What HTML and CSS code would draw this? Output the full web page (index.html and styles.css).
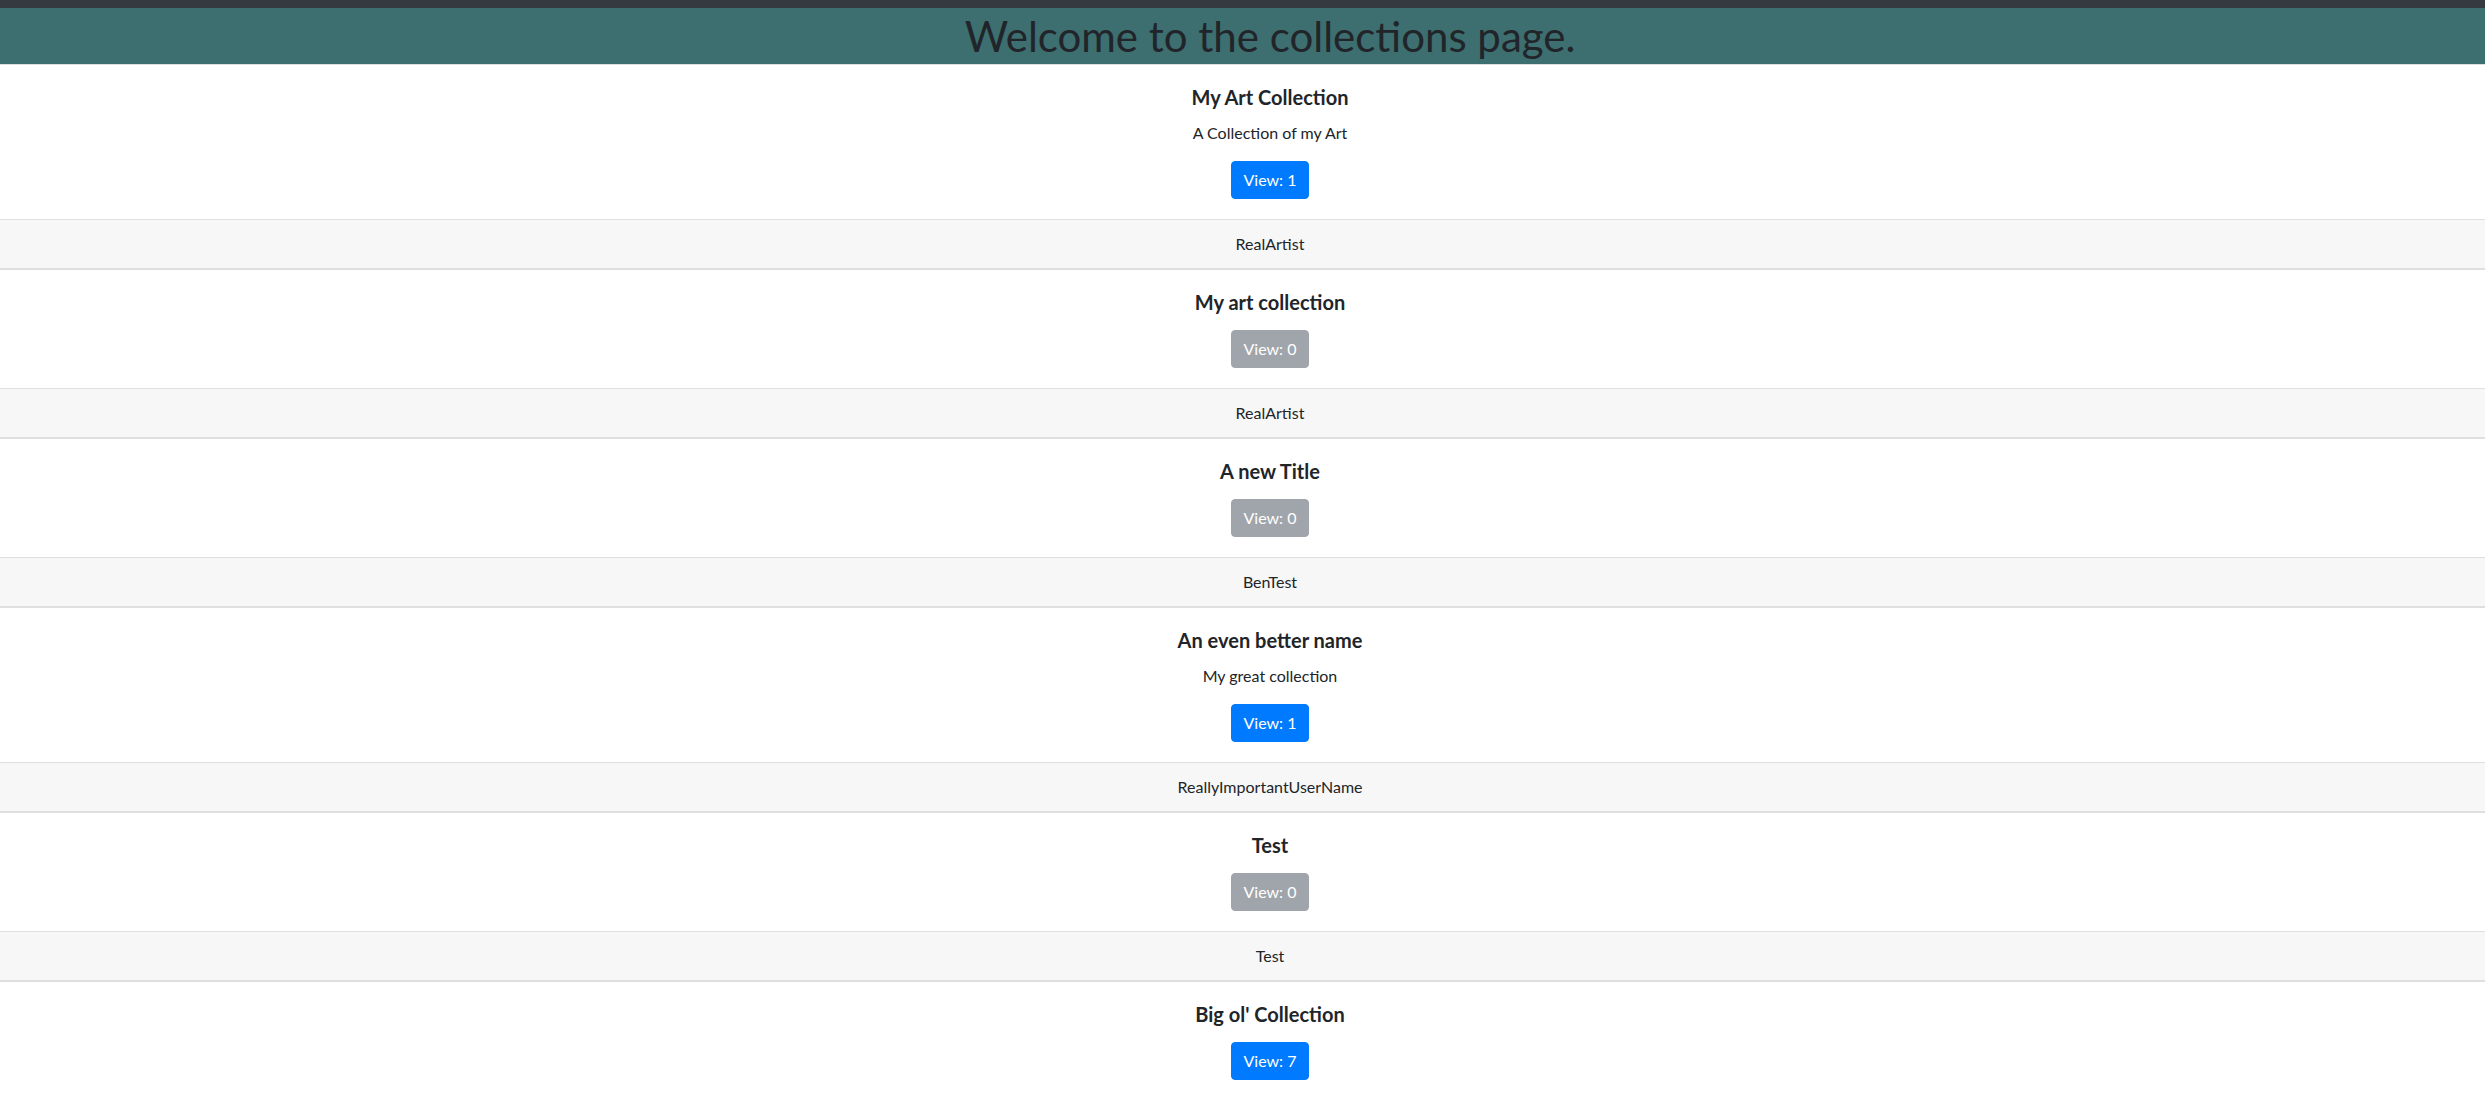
FILE: index.html
```html
<!DOCTYPE html>
<html lang="en">
<head>
<meta charset="utf-8">
<title>Collections</title>
<link rel="stylesheet" href="styles.css">
</head>
<body>
<div class="page">
  <div class="topbar"></div>
  <header class="banner">
    <h1 class="banner-title">Welcome to the collections page.</h1>
  </header>
  <main class="cards">
    <div class="card">
      <div class="card-body">
        <h5 class="card-title">My Art Collection</h5>
        <p class="card-text">A Collection of my Art</p>
        <a class="btn btn-primary">View: 1</a>
      </div>
      <div class="card-footer">RealArtist</div>
    </div>
    <div class="card">
      <div class="card-body">
        <h5 class="card-title">My art collection</h5>
        <p class="card-text"></p>
        <a class="btn btn-secondary">View: 0</a>
      </div>
      <div class="card-footer">RealArtist</div>
    </div>
    <div class="card">
      <div class="card-body">
        <h5 class="card-title">A new Title</h5>
        <p class="card-text"></p>
        <a class="btn btn-secondary">View: 0</a>
      </div>
      <div class="card-footer">BenTest</div>
    </div>
    <div class="card">
      <div class="card-body">
        <h5 class="card-title">An even better name</h5>
        <p class="card-text">My great collection</p>
        <a class="btn btn-primary">View: 1</a>
      </div>
      <div class="card-footer">ReallyImportantUserName</div>
    </div>
    <div class="card">
      <div class="card-body">
        <h5 class="card-title">Test</h5>
        <p class="card-text"></p>
        <a class="btn btn-secondary">View: 0</a>
      </div>
      <div class="card-footer">Test</div>
    </div>
    <div class="card">
      <div class="card-body">
        <h5 class="card-title">Big ol' Collection</h5>
        <p class="card-text"></p>
        <a class="btn btn-primary">View: 7</a>
      </div>
    </div>
  </main>
</div>
</body>
</html>
```
FILE: styles.css
```css
html, body {
  margin: 0;
  padding: 0;
  background: #fff;
}
body {
  overflow-x: hidden;
  font-family: Lato, "Noto Sans", "Liberation Sans", sans-serif;
  font-size: 16px;
  line-height: 1.5;
  color: #212529;
}
.page {
  width: calc(100% + 55px);
}
.topbar {
  height: 8px;
  background: #343a40;
}
.banner {
  background: #3d6e70;
  height: 56px;
  text-align: center;
}
.banner-title {
  margin: 0;
  font-size: 42px;
  font-weight: 400;
  line-height: 56px;
  color: #212529;
}
.card {
  border-top: 1px solid #dfdfdf;
  border-bottom: 1px solid #dfdfdf;
  text-align: center;
  background: #fff;
}
.card-body {
  padding: 20px;
}
.card-title {
  margin: 0 0 12px;
  font-size: 20px;
  font-weight: 700;
  line-height: 24px;
}
.card-text {
  margin: 0 0 16px;
}
.btn {
  display: inline-block;
  vertical-align: middle;
  box-sizing: border-box;
  height: 38px;
  padding: 6px 12px;
  font-size: 16px;
  line-height: 24px;
  border-radius: 4px;
  color: #fff;
  border: 1px solid transparent;
}
.btn-primary {
  background: #007bff;
  border-color: #007bff;
}
.btn-secondary {
  background: #a0a5ab;
  border-color: #a0a5ab;
}
.card-footer {
  padding: 12px 20px;
  background: #f7f7f7;
  border-top: 1px solid #dfdfdf;
}
```
